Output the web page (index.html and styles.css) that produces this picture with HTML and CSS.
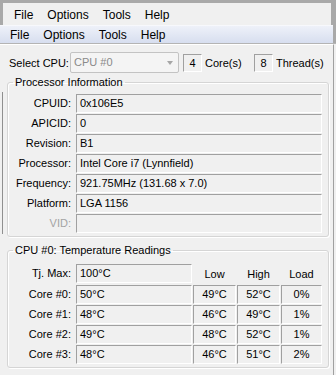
FILE: index.html
```html
<!DOCTYPE html>
<html lang="en">
<head>
  <meta charset="UTF-8">
  <meta name="viewport" content="width=device-width, initial-scale=1.0">
  <title>Core Temp</title>
  <link rel="stylesheet" href="styles.css">
</head>
<body>

  <div class="top-frame">
    <div class="menu outer-menu">
      <span>File</span><span>Options</span><span>Tools</span><span>Help</span>
    </div>
  </div>

  <div class="bar-wrap">
    <div class="menu inner-menu">
      <span>File</span><span>Options</span><span>Tools</span><span>Help</span>
    </div>
  </div>

  <div class="content">
    <div class="cpu-row">
      <span class="sel-label">Select CPU:</span>
      <div class="combo">CPU #0<span class="arrow"></span></div>
      <div class="box">4</div>
      <span class="count-label">Core(s)</span>
      <div class="box">8</div>
      <span class="count-label">Thread(s)</span>
    </div>

    <fieldset class="group info">
      <legend>Processor Information</legend>
      <div class="grid">
        <span class="lbl">CPUID:</span><span class="field">0x106E5</span>
        <span class="lbl">APICID:</span><span class="field">0</span>
        <span class="lbl">Revision:</span><span class="field">B1</span>
        <span class="lbl">Processor:</span><span class="field">Intel Core i7 (Lynnfield)</span>
        <span class="lbl">Frequency:</span><span class="field">921.75MHz (131.68 x 7.0)</span>
        <span class="lbl">Platform:</span><span class="field">LGA 1156</span>
        <span class="lbl disabled">VID:</span><span class="field"></span>
      </div>
    </fieldset>

    <fieldset class="group temps">
      <legend>CPU #0: Temperature Readings</legend>
      <div class="temp-grid">
        <span class="lbl">Tj. Max:</span><span class="field">100°C</span>
        <span class="head">Low</span><span class="head">High</span><span class="head">Load</span>

        <span class="lbl">Core #0:</span><span class="field">50°C</span>
        <span class="field num">49°C</span><span class="field num">52°C</span><span class="field num">0%</span>

        <span class="lbl">Core #1:</span><span class="field">48°C</span>
        <span class="field num">46°C</span><span class="field num">49°C</span><span class="field num">1%</span>

        <span class="lbl">Core #2:</span><span class="field">49°C</span>
        <span class="field num">48°C</span><span class="field num">52°C</span><span class="field num">1%</span>

        <span class="lbl">Core #3:</span><span class="field">48°C</span>
        <span class="field num">46°C</span><span class="field num">51°C</span><span class="field num">2%</span>
      </div>
    </fieldset>
  </div>

</body>
</html>
```

FILE: styles.css
```css
* {
  margin: 0;
  padding: 0;
  box-sizing: border-box;
}

body {
  width: 336px;
  height: 375px;
  overflow: hidden;
  background: #f0f0f0;
  font-family: "Liberation Sans", Arial, sans-serif;
  font-size: 11px;
  color: #000;
}

/* window frame + menus */
.top-frame {
  border-top: 3px solid #a9a9a9;
}

.menu {
  display: flex;
  font-size: 12px;
}

.menu span {
  padding: 0 7px;
}

.outer-menu {
  height: 22px;
  padding: 5px 0 0 4px;
  line-height: 15px;
  border-left: 3px solid #a9a9a9;
  border-right: 5px solid #a9a9a9;
}

.bar-wrap {
  background: #a9a9a9;
  padding-right: 3px;
  border-bottom: 1px solid #b4b4b4;
}

.inner-menu {
  height: 18px;
  padding: 1px 0 0 3px;
  line-height: 17px;
  background: linear-gradient(#eef1f9, #d7deef);
  border-top: 1px solid #f7f8fc;
}

.content {
  width: 334px;
  height: 331px;
  padding-top: 7px;
  border-top: 1px solid #fff;
  border-right: 1px solid #a0a0a0;
}

/* cpu selector row */
.cpu-row {
  display: flex;
  align-items: center;
  height: 21px;
}

.sel-label {
  width: 70px;
  padding-left: 9px;
}

.combo {
  position: relative;
  width: 109px;
  height: 21px;
  margin-right: 4px;
  padding-left: 3px;
  line-height: 19px;
  color: #8a8a8a;
  background: #f4f4f4;
  border: 1px solid #c3c3c3;
  border-radius: 2px;
}

.arrow {
  position: absolute;
  right: 5px;
  top: 8px;
  border-left: 3px solid transparent;
  border-right: 3px solid transparent;
  border-top: 4px solid #a6a6a6;
}

.box {
  width: 19px;
  height: 18px;
  line-height: 16px;
  text-align: center;
  border: 1px solid;
  border-color: #a0a0a0 #fff #fff #a0a0a0;
}

.count-label {
  padding-left: 3px;
  width: 52px;
}

/* group boxes */
.group {
  width: 322px;
  margin-left: 7px;
  min-width: 0;
  border: 1px solid #d5d5d5;
  border-radius: 3px;
  box-shadow: inset 1px 1px #fff, 1px 1px #fff;
}

.group legend {
  margin-left: 5px;
  padding: 0 2px;
  line-height: 12px;
}

.info {
  position: relative;
  margin-top: 3px;
  padding: 6px 6px 3px 0;
}

.info::before {
  content: "";
  position: absolute;
  left: -6px;
  top: 4px;
  bottom: 2px;
  width: 1px;
  background: #8f8f8f;
}

.temps {
  margin-top: 7px;
  padding: 8px 6px 3px 0;
}

.grid {
  display: grid;
  grid-template-columns: 67px 246px;
  column-gap: 1px;
  row-gap: 1px;
}

.temp-grid {
  display: grid;
  grid-template-columns: 67px 116px 43px 43px 41px;
  column-gap: 1px;
  row-gap: 1px;
}

.lbl {
  padding-right: 4px;
  text-align: right;
  line-height: 19px;
}

.lbl.disabled {
  color: #a3a3a3;
}

.field {
  height: 19px;
  padding-left: 3px;
  line-height: 17px;
  border: 1px solid;
  border-color: #a0a0a0 #fff #fff #a0a0a0;
  white-space: nowrap;
}

.field.num {
  padding-left: 0;
  text-align: center;
}

.head {
  text-align: center;
  line-height: 19px;
  padding-top: 1px;
}
```
